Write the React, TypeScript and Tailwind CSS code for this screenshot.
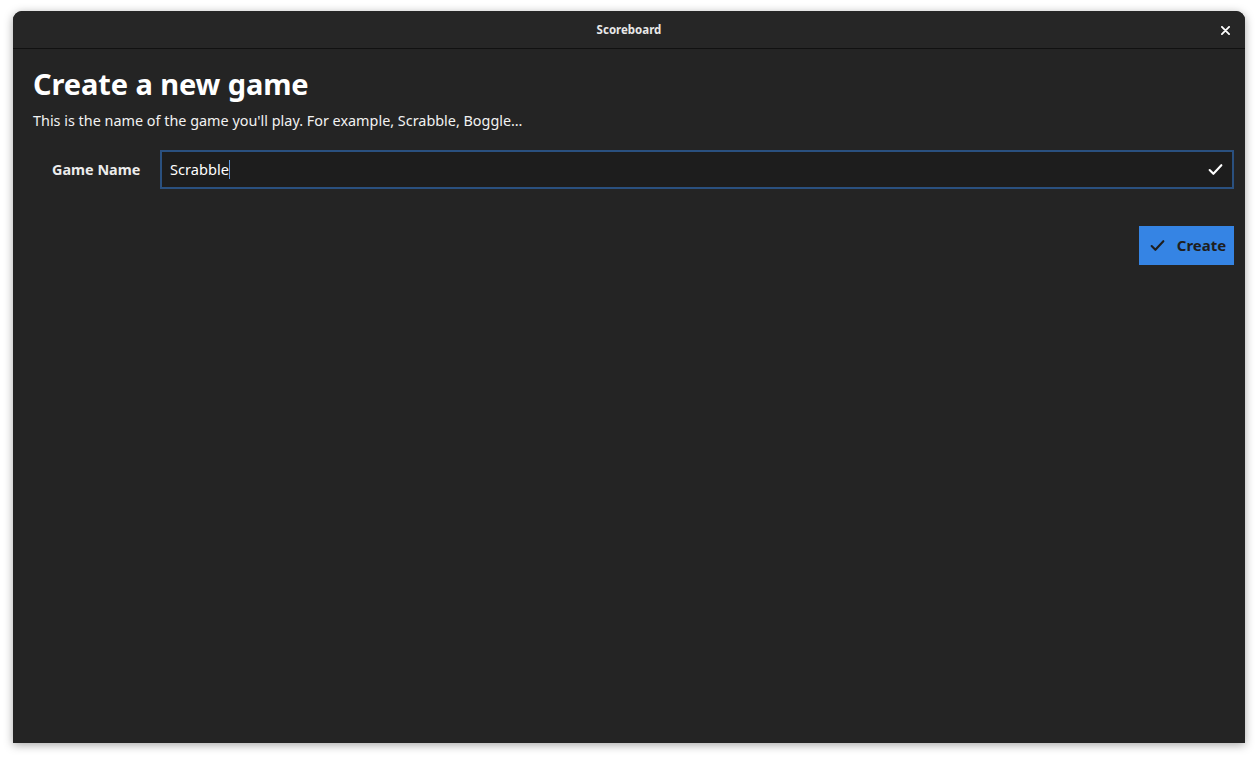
import React from "react";

function Check({ className }: { className?: string }) {
  return (
    <svg viewBox="0 0 16 16" className={className} fill="none" stroke="currentColor" strokeWidth={2} strokeLinecap="round" strokeLinejoin="round">
      <path d="M2.5 8.5 L6 12 L13.5 4" />
    </svg>
  );
}

export default function App() {
  return (
    <div className="w-[1258px] h-[759px] bg-white pl-[13px] pt-[11px]" style={{ fontFamily: '"Noto Sans", sans-serif' }}>
      <div className="w-[1232px] h-[732px] rounded-t-[9px] bg-[#242424] shadow-[0_2px_10px_rgba(0,0,0,0.35)] flex flex-col overflow-hidden">
        <div className="h-[38px] bg-[#262626] border-b border-[#111111] flex items-center justify-center relative shrink-0">
          <span className="text-[11.5px] font-bold text-[#e8e8e8]">Scoreboard</span>
          <svg viewBox="0 0 10 10" className="absolute right-[15px] top-[15px] w-[9px] h-[9px] text-white" stroke="currentColor" strokeWidth={2} strokeLinecap="round">
            <path d="M1 1 L9 9 M9 1 L1 9" />
          </svg>
        </div>
        <div className="pl-[20px] pr-[11px] pt-[15px] flex flex-col">
          <h1 className="text-[29px] leading-[40px] font-bold text-white tracking-[-0.1px]">Create a new game</h1>
          <p className="text-[14.4px] leading-[20px] text-[#f2f2f2] mt-[7px]">This is the name of the game you'll play. For example, Scrabble, Boggle…</p>
          <div className="flex items-center mt-[19px]">
            <div className="w-[127px] pl-[19px] text-[14.4px] font-bold text-[#ececec]">Game Name</div>
            <div className="flex-1 h-[39px] bg-[#1d1d1d] border-2 border-[#2a507f] flex items-center pl-[8px] pr-[8px]">
              <span className="text-[14.6px] text-white">Scrabble</span>
              <span className="w-[1px] h-[19px] bg-[#5b9ae8]"></span>
              <div className="flex-1" />
              <Check className="w-[17px] h-[17px] text-white" />
            </div>
          </div>
          <div className="flex justify-end mt-[37px]">
            <button className="w-[95px] h-[39px] bg-[#3584e4] flex items-center justify-center gap-[11px] pl-[2px] text-[#1e1e1e] text-[15px] font-bold">
              <Check className="w-[17px] h-[17px]" />
              <span>Create</span>
            </button>
          </div>
        </div>
      </div>
    </div>
  );
}
